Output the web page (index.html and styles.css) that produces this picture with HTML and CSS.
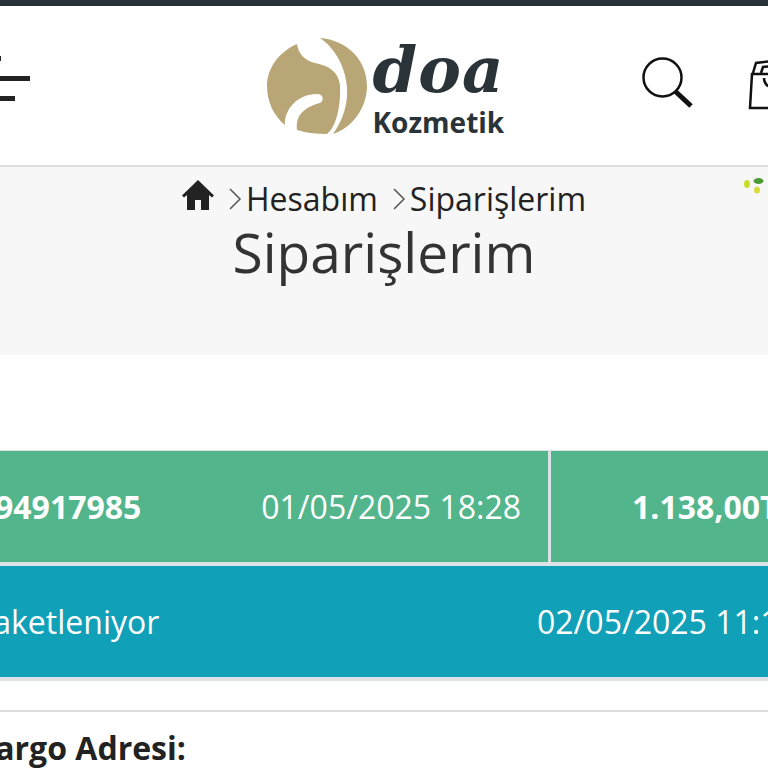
FILE: index.html
```html
<!DOCTYPE html>
<html lang="tr">
<head>
    <meta charset="UTF-8">
    <meta name="viewport" content="width=device-width, initial-scale=1.0">
    <title>Siparişlerim</title>
    <link rel="stylesheet" href="styles.css">
</head>
<body>
    <div class="top-bar"></div>

    <!-- Header -->
    <header class="header">
        <button class="menu-btn" aria-label="Menu">
            <span class="bar bar-top"></span>
            <span class="bar bar-mid"></span>
            <span class="bar bar-low"></span>
        </button>
        <a class="logo" href="#">
            <svg class="logo-mark" viewBox="0 0 100 100">
                <path d="M30 8C12 16 0 32 0 50C0 66 7 80 18 89C17 74 30 58 50 58C57 58 57 65 53 67C42 70 28 76 30 94C40 97 50 98 60 98C70 90 74 68 73 49C71 35 62 30 48 27C38 25 31 17 30 8Z"/>
                <path d="M53 2C80 4 100 24 100 50C100 72 85 92 66 98C76 84 81 68 80 52C79 32 68 12 53 2Z"/>
            </svg>
            <div class="logo-text">
                <div class="logo-name">doa</div>
                <div class="logo-sub">Kozmetik</div>
            </div>
        </a>
        <div class="header-icons">
            <svg class="icon-search" viewBox="0 0 52 52">
                <circle cx="20.5" cy="20.5" r="19" />
                <path class="handle" d="M33 34L49 49"/>
            </svg>
            <svg class="icon-bag" viewBox="0 0 50 52">
                <path d="M2 50L4 16H48V50Z"/>
                <path d="M5 15L8 5L34 2L40 15"/>
                <path d="M13 15L15 9L32 7"/>
                <path d="M16 20C16 32 32 32 32 20"/>
            </svg>
        </div>
    </header>

    <!-- Page title -->
    <section class="page-head">
        <nav class="breadcrumb">
            <svg class="icon-home" viewBox="0 0 32 30">
                <path d="M16 0L32 15.5L30 17.5L27 15V30H19V20H13V30H5V15L2 17.5L0 15.5Z"/>
            </svg>
            <svg class="chevron" viewBox="0 0 14 24"><path d="M2 2L12 12L2 22"/></svg>
            <span>Hesabım</span>
            <svg class="chevron chevron-second" viewBox="0 0 14 24"><path d="M2 2L12 12L2 22"/></svg>
            <span>Siparişlerim</span>
        </nav>
        <h1>Siparişlerim</h1>
        <svg class="dots" viewBox="0 0 24 18">
            <ellipse cx="4" cy="7" rx="3" ry="4" fill="#c9dc2c"/>
            <ellipse cx="15.500" cy="4" rx="5" ry="3" fill="#4c9a35"/>
            <ellipse cx="14" cy="13" rx="3" ry="3.500" fill="#d9dc3c"/>
        </svg>
    </section>

    <!-- Order -->
    <section class="order">
        <div class="order-row order-main">
            <div class="order-info">
                <strong>94917985</strong>
                <span>01/05/2025 18:28</span>
            </div>
            <strong class="order-total">1.138,00TL</strong>
        </div>
        <div class="order-row order-status">
            <span class="status-name">Paketleniyor</span>
            <span>02/05/2025 11:15</span>
        </div>
    </section>

    <div class="address">Kargo Adresi:</div>
</body>
</html>
```

FILE: styles.css
```css
html, body {
    margin: 0;
    padding: 0;
    height: 768px;
    overflow: hidden;
}
body {
    font-family: "Open Sans", sans-serif;
    background-color: #fff;
    color: #222;
}
.top-bar {
    height: 6px;
    background-color: #263238;
}
.header {
    display: grid;
    grid-template-columns: 1fr auto 1fr;
    align-items: center;
    height: 159px;
    border-bottom: 2px solid #ddd;
}
.menu-btn {
    display: flex;
    flex-direction: column;
    gap: 15px;
    width: 60px;
    margin-left: -30px;
    margin-top: -14px;
    padding: 0;
    border: none;
    background: none;
}
.bar {
    display: block;
    height: 5px;
    background-color: #222;
}
.bar-top {
    width: 31px;
}
.bar-mid {
    width: 60px;
}
.bar-low {
    width: 45px;
}
.logo {
    display: flex;
    align-items: center;
    gap: 6px;
    margin-left: 3px;
    color: #2a3338;
    text-decoration: none;
}
.logo-mark {
    width: 100px;
    height: 100px;
    fill: #b9a677;
}
.logo-text {
    width: 132px;
}
.logo-name {
    height: 72px;
    font-family: "DejaVu Serif", serif;
    font-style: italic;
    font-weight: bold;
    font-size: 64px;
    line-height: 68px;
    letter-spacing: 1px;
}
.logo-sub {
    font-weight: bold;
    font-size: 28px;
    line-height: 28px;
}
.header-icons {
    display: flex;
    justify-content: flex-end;
    align-items: center;
    gap: 54px;
    margin-right: -30px;
    margin-top: -6px;
}
.icon-search {
    width: 52px;
    height: 52px;
    fill: none;
    stroke: #111;
    stroke-width: 2.500;
}
.icon-search .handle {
    stroke-width: 5;
}
.icon-bag {
    width: 50px;
    height: 52px;
    margin-top: 2px;
    fill: none;
    stroke: #111;
    stroke-width: 2.500;
}
.page-head {
    position: relative;
    height: 188px;
    background-color: #f7f7f7;
    text-align: center;
}
.breadcrumb {
    display: flex;
    justify-content: center;
    align-items: center;
    height: 62px;
    font-size: 32px;
    color: #222;
}
.icon-home {
    width: 32px;
    height: 30px;
    margin-top: -6px;
    fill: #222;
}
.chevron {
    width: 14px;
    height: 24px;
    margin: 2px 4px 0 14px;
    fill: none;
    stroke: #555;
    stroke-width: 1.500;
}
.chevron-second {
    margin-left: 14px;
}
h1 {
    margin: -9px 0 0;
    font-size: 55px;
    font-weight: 400;
    line-height: 64px;
    color: #333;
}
.dots {
    position: absolute;
    top: 10px;
    left: 743px;
    width: 24px;
    height: 18px;
}
.order {
    margin: 95px -40px 0;
    border-top: 1px solid #dde2e6;
}
.order-row {
    display: grid;
    height: 111px;
    align-items: center;
    font-size: 32px;
    color: #fff;
}
.order-main {
    grid-template-columns: 591px 1fr;
    background-color: #52b58b;
    border-bottom: 4px solid #dde2e6;
}
.order-info {
    display: flex;
    justify-content: space-between;
    align-items: center;
    height: 100%;
    padding: 0 27px 0 35px;
    box-sizing: border-box;
    border-right: 3px solid #dde2e6;
}
.order-total {
    padding-left: 81px;
}
.order-status {
    grid-template-columns: 577px 1fr;
    background-color: #10a0b8;
    border-bottom: 4px solid #dde2e6;
}
.status-name {
    padding-left: 14px;
}
.address {
    margin: 29px -40px 0;
    padding: 16px 0 0 14px;
    border-top: 2px solid #ddd;
    font-size: 32px;
    font-weight: bold;
    line-height: 40px;
}
```
